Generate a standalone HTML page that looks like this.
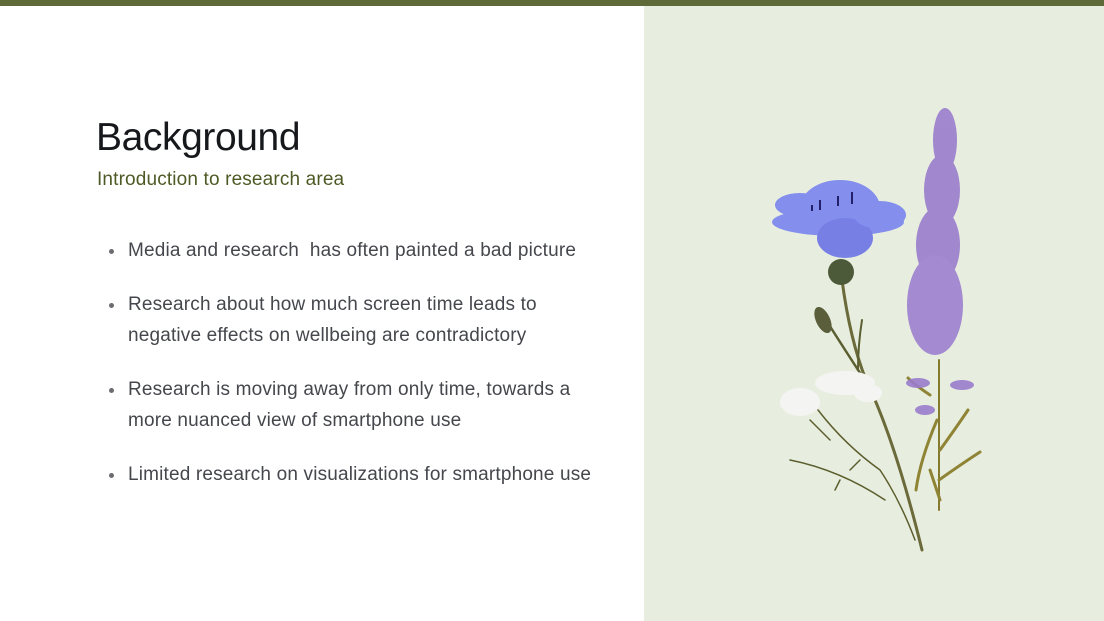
<!DOCTYPE html>
<html><head><meta charset="utf-8"><style>
html,body{margin:0;padding:0}
body{width:1104px;height:621px;position:relative;overflow:hidden;background:#fff;font-family:"Liberation Sans",sans-serif}
.bar{position:absolute;left:0;top:0;width:1104px;height:6px;background:#5e6a38}
.panel{position:absolute;left:644px;top:6px;width:460px;height:615px;background:#e8eedf}
h1{position:absolute;left:96px;top:116px;margin:0;font-weight:400;font-size:39px;letter-spacing:-0.4px;color:#16181c}
.sub{position:absolute;left:97px;top:169px;font-size:19px;color:#4e5a26;letter-spacing:0.15px}
ul{position:absolute;left:110px;top:235px;margin:0;padding:0;list-style:none;width:500px}
li{position:relative;padding-left:18px;font-size:19px;line-height:31px;color:#45474c;margin-bottom:23px;letter-spacing:0.17px}
li:before{content:"";position:absolute;left:-1px;top:14px;width:5px;height:5px;border-radius:50%;background:#6a6c70}
</style></head><body>
<div class="bar"></div>
<div class="panel"></div>
<h1>Background</h1>
<div class="sub">Introduction to research area</div>
<ul>
<li>Media and research&nbsp; has often painted a bad picture</li>
<li>Research about how much screen time leads to<br>negative effects on wellbeing are contradictory</li>
<li>Research is moving away from only time, towards a<br>more nuanced view of smartphone use</li>
<li>Limited research on visualizations for smartphone use</li>
</ul>
<svg style="position:absolute;left:0;top:0" width="1104" height="621">
<g fill="none" stroke-linecap="round">
<path d="M842 280 Q850 340 866 380 Q895 440 922 550" stroke="#6b6a3a" stroke-width="3"/>
<path d="M862 320 Q858 345 858 370" stroke="#5a5e30" stroke-width="2"/>
<path d="M826 320 Q845 350 862 376" stroke="#5a5e30" stroke-width="2.5"/>
<path d="M939 360 L939 510" stroke="#857a30" stroke-width="2"/>
<path d="M937 420 Q920 460 916 490 M940 450 Q958 425 968 410 M939 480 Q960 465 980 452 M930 395 Q915 385 908 378 M930 470 Q935 485 940 500" stroke="#8f8435" stroke-width="3"/>
<path d="M790 460 Q840 470 885 500 M818 410 Q845 445 880 470 Q900 500 915 540 M810 420 L830 440 M850 470 L860 460 M840 480 L835 490" stroke="#5c5e2e" stroke-width="1.5"/>
</g>
<ellipse cx="823" cy="320" rx="7" ry="14" fill="#5a5e3a" transform="rotate(-25 823 320)"/>
<ellipse cx="841" cy="272" rx="13" ry="13" fill="#4d5a3a"/>
<g fill="#7a84ee" opacity="0.9">
<ellipse cx="838" cy="222" rx="66" ry="14"/>
<ellipse cx="840" cy="208" rx="40" ry="28"/>
<ellipse cx="845" cy="238" rx="28" ry="20" fill="#6b74e6"/>
<ellipse cx="800" cy="205" rx="25" ry="12"/>
<ellipse cx="880" cy="215" rx="26" ry="14"/>
</g>
<g stroke="#22206a" stroke-width="2"><path d="M812 205v6M820 200v10M838 196v10M852 192v12"/></g>
<g fill="#9a7ccc" opacity="0.9">
<ellipse cx="945" cy="140" rx="12" ry="32"/>
<ellipse cx="942" cy="190" rx="18" ry="35"/>
<ellipse cx="938" cy="245" rx="22" ry="38"/>
<ellipse cx="935" cy="305" rx="28" ry="50" fill="#9d80cf"/>
<ellipse cx="918" cy="383" rx="12" ry="5"/>
<ellipse cx="962" cy="385" rx="12" ry="5"/>
<ellipse cx="925" cy="410" rx="10" ry="5"/>
</g>
<g fill="#f4f5f2">
<ellipse cx="845" cy="383" rx="30" ry="12"/>
<ellipse cx="800" cy="402" rx="20" ry="14"/>
<ellipse cx="868" cy="393" rx="14" ry="9"/>
</g>
</svg>
</body></html>
